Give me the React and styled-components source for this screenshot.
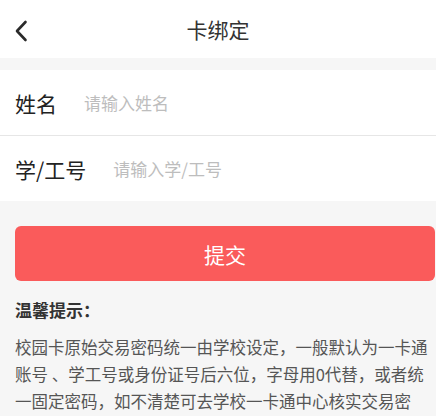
import React from 'react';
import styled, { createGlobalStyle } from 'styled-components';

const GlobalStyle = createGlobalStyle`
  html, body {
    margin: 0;
    padding: 0;
    background: #f6f6f6;
    font-family: "Noto Sans CJK SC", "Noto Sans", sans-serif;
  }
`;

const StyledPage = styled.div`
  width: 436px;
  height: 416px;
  overflow: hidden;
  background: #f6f6f6;
`;

const StyledHeader = styled.header`
  position: relative;
  height: 58px;
  display: flex;
  align-items: center;
  justify-content: center;
  background: #fff;
`;

const StyledBack = styled.button`
  position: absolute;
  left: 8px;
  top: 15px;
  width: 26px;
  height: 32px;
  padding: 0;
  border: none;
  background: transparent;
  display: flex;
  align-items: center;
  justify-content: center;
`;

const StyledTitle = styled.h1`
  margin: 0;
  font-size: 21px;
  font-weight: 400;
  color: #333;
`;

const StyledForm = styled.div`
  margin-top: 12px;
  background: #fff;
`;

const StyledRow = styled.label`
  height: 65px;
  display: flex;
  align-items: center;
  gap: 27px;
  padding: 0 15px;
  border-bottom: ${({ $divider }) => ($divider ? '1px solid #e6e6e6' : 'none')};
`;

const StyledLabel = styled.span`
  font-size: 21px;
  color: #222;
`;

const StyledInput = styled.input`
  flex: 1;
  border: none;
  outline: none;
  padding: 0;
  font-family: inherit;
  font-size: 17px;
  color: #333;
  background: transparent;

  &::placeholder {
    color: #bdbdbd;
  }
`;

const StyledButton = styled.button`
  display: block;
  width: 420px;
  height: 55px;
  margin: 25px 0 0 15px;
  border: none;
  border-radius: 6px;
  background: #fa5b5b;
  color: #fff;
  font-family: inherit;
  font-size: 21px;
`;

const StyledTips = styled.div`
  padding: 16px 6px 0 15px;
`;

const StyledTipsHeading = styled.h2`
  margin: 0 0 12px 0;
  font-size: 17px;
  font-weight: 700;
  color: #333;
`;

const StyledParagraph = styled.p`
  margin: 0;
  font-size: 16.5px;
  line-height: 27px;
  color: #555;
`;

const BackIcon = () => (
  <svg width="14" height="22" viewBox="0 0 14 22" fill="none">
    <path d="M11.5 2 L3 11 L11.5 20" stroke="#2a2a2a" strokeWidth="2.6" strokeLinecap="round" strokeLinejoin="round" />
  </svg>
);

const App = () => (
  <>
    <GlobalStyle />
    <StyledPage>
      <StyledHeader>
        <StyledBack aria-label="back">
          <BackIcon />
        </StyledBack>
        <StyledTitle>卡绑定</StyledTitle>
      </StyledHeader>

      <StyledForm>
        <StyledRow $divider>
          <StyledLabel>姓名</StyledLabel>
          <StyledInput placeholder="请输入姓名" />
        </StyledRow>
        <StyledRow>
          <StyledLabel>学/工号</StyledLabel>
          <StyledInput placeholder="请输入学/工号" />
        </StyledRow>
      </StyledForm>

      <StyledButton>提交</StyledButton>

      <StyledTips>
        <StyledTipsHeading>温馨提示：</StyledTipsHeading>
        <StyledParagraph>
          校园卡原始交易密码统一由学校设定，一般默认为一卡通账号 、学工号或身份证号后六位，字母用0代替，或者统一固定密码，如不清楚可去学校一卡通中心核实交易密码。
        </StyledParagraph>
      </StyledTips>
    </StyledPage>
  </>
);

export default App;
